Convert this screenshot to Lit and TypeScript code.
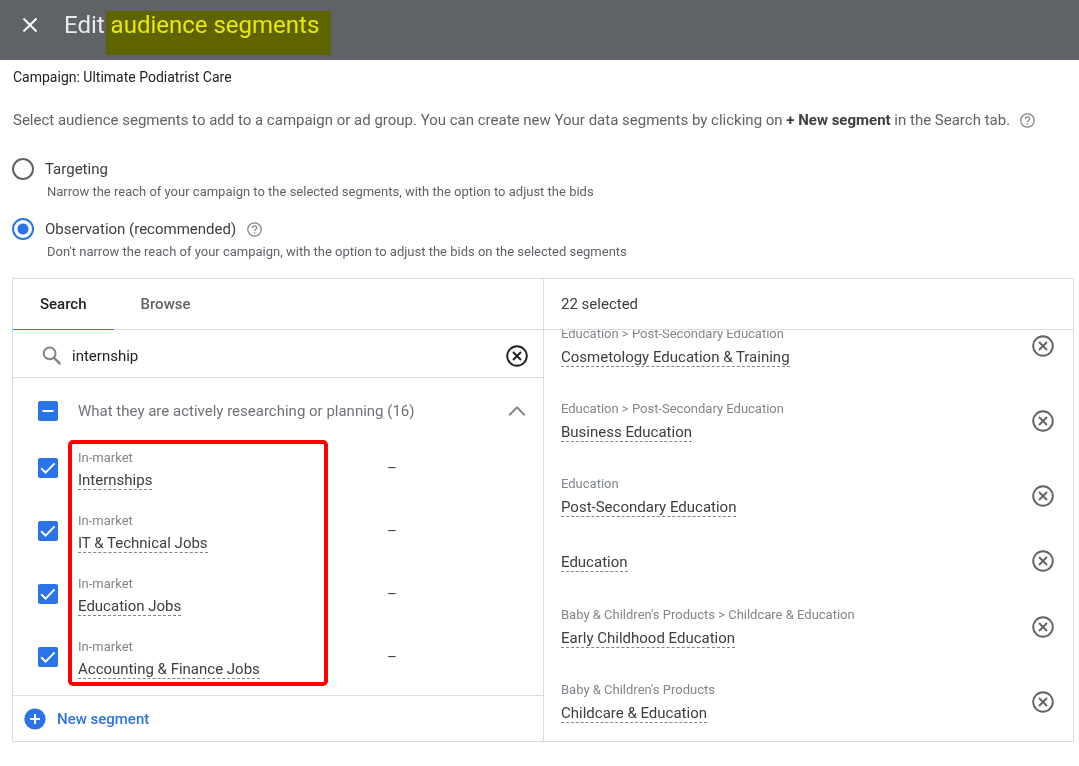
import { LitElement, html, css, svg } from "lit";
import { customElement, state, query } from "lit/decorators.js";

interface Segment {
  category?: string;
  name: string;
}

const found: Segment[] = [
  { category: "In-market", name: "Internships" },
  { category: "In-market", name: "IT & Technical Jobs" },
  { category: "In-market", name: "Education Jobs" },
  { category: "In-market", name: "Accounting & Finance Jobs" },
];

const selected: Segment[] = [
  { category: "Education > Post-Secondary Education", name: "Cosmetology Education & Training" },
  { category: "Education > Post-Secondary Education", name: "Business Education" },
  { category: "Education", name: "Post-Secondary Education" },
  { name: "Education" },
  { category: "Baby & Children's Products > Childcare & Education", name: "Early Childhood Education" },
  { category: "Baby & Children's Products", name: "Childcare & Education" },
];

const icon = (size: number, box: number, body: unknown) => html`<svg
  width=${size}
  height=${size}
  viewBox="0 0 ${box} ${box}"
  fill="none"
  stroke="currentColor"
  aria-hidden="true"
>${body}</svg>`;

const closeIcon = () => icon(16, 16, svg`<path stroke-width="2" d="M1.5 1.5l13 13M14.5 1.5l-13 13" />`);
const helpIcon = () =>
  icon(15, 15, svg`<circle cx="7.5" cy="7.5" r="6.7" stroke-width="1.3" />
    <path stroke-width="1.3" d="M5.4 6.1c0-1.3.9-2.2 2.1-2.2s2.1.8 2.1 2c0 1.5-2.1 1.6-2.1 3.2" />
    <path stroke-width="1.4" d="M7.5 10.2v1.5" />`);
const removeIcon = () =>
  icon(22, 22, svg`<circle cx="11" cy="11" r="9.8" stroke-width="1.9" />
    <path stroke-width="1.9" d="M7 7l8 8M15 7l-8 8" />`);
const searchIcon = () =>
  icon(20, 20, svg`<circle cx="7.6" cy="7.4" r="5.9" stroke-width="2" />
    <path stroke-width="2.4" d="M11.8 11.6l6.6 6.6" />`);
const chevronIcon = () => icon(18, 18, svg`<path stroke-width="2" d="M1.2 13.2L9 5.4l7.8 7.8" />`);
const plusIcon = () =>
  icon(22, 22, svg`<circle cx="11" cy="11" r="10.6" fill="currentColor" stroke="none" />
    <path stroke="#fff" stroke-width="2" d="M11 6.1v9.8M6.1 11h9.8" />`);
const tickIcon = () => icon(20, 20, svg`<path stroke="#fff" stroke-width="2" d="M3.2 10.2l4.4 4.4 9-9.2" />`);
const minusIcon = () => icon(20, 20, svg`<path stroke="#fff" stroke-width="2" d="M4.5 10h11" />`);

@customElement("app-root")
export class AppRoot extends LitElement {
  @state() private mode = "observation";
  @query(".selected-list") private selectedList!: HTMLElement;

  static styles = css`
    :host {
      --blue: #2a73e8;
      --line: #dadce0;
      display: block;
      background: #fff;
      color: #3c4043;
      font: 15px/20px Roboto, "Liberation Sans", sans-serif;
    }
    * { box-sizing: border-box; }
    svg { display: block; flex: none; }
    h1, h2, p, ul { margin: 0; padding: 0; }
    ul { list-style: none; }
    button {
      border: 0;
      padding: 0;
      background: none;
      color: inherit;
      font: inherit;
      cursor: pointer;
    }
    input { margin: 0; }

    .bar {
      display: flex;
      align-items: center;
      gap: 26px;
      height: 60px;
      padding: 0 22px 10px;
      background: #5f6368;
      color: #fff;
    }
    .title {
      font-size: 24px;
      line-height: 32px;
      font-weight: 400;
      color: #e8eaed;
    }
    .marked { position: relative; }
    .marked::after {
      content: "";
      position: absolute;
      inset: 0 -12px -16px -5px;
      background: #ff0;
      mix-blend-mode: multiply;
    }

    .page { padding: 7px 5px 24px 12px; }
    .campaign {
      font-size: 14px;
      color: #202124;
      padding-left: 1px;
    }
    .intro {
      display: flex;
      align-items: center;
      gap: 10px;
      padding: 23px 0 0 1px;
      color: #5f6368;
    }
    .intro strong { color: #3c4043; }
    .help { color: #80868b; }

    .modes {
      border: 0;
      margin: 0;
      padding: 28px 0 0;
      display: grid;
      gap: 14px;
    }
    .mode {
      display: grid;
      grid-template-columns: 22px auto auto 1fr;
      column-gap: 11px;
      align-items: center;
    }
    .radio {
      appearance: none;
      width: 22px;
      height: 22px;
      border: 2px solid #5f6368;
      border-radius: 50%;
    }
    .radio:checked {
      border-color: var(--blue);
      background: radial-gradient(circle, var(--blue) 5px, #fff 6px);
    }
    .hint {
      grid-column: 2 / -1;
      padding-left: 2px;
      font-size: 13px;
      line-height: 24px;
      color: #5f6368;
    }

    .picker {
      display: grid;
      grid-template-columns: 1fr 1fr;
      margin-top: 14px;
      border: 1px solid var(--line);
    }
    .right {
      display: flex;
      flex-direction: column;
      border-left: 1px solid var(--line);
    }
    .tabs {
      display: flex;
      height: 51px;
      border-bottom: 1px solid var(--line);
    }
    .tab {
      height: 51px;
      padding: 0 27px;
      font-weight: 500;
      color: #5f6368;
      border-bottom: 1px solid transparent;
    }
    .tab.current {
      color: #202124;
      border-bottom-color: var(--blue);
    }
    .search {
      display: flex;
      align-items: center;
      gap: 10px;
      height: 48px;
      padding: 4px 15px 0 29px;
      color: #80868b;
      border-bottom: 1px solid var(--line);
    }
    .query {
      flex: 1;
      min-width: 0;
      border: 0;
      padding: 0;
      outline: 0;
      background: none;
      font: inherit;
      color: #202124;
    }
    .clear { color: #202124; }

    .results { padding: 8px 0 7px; }
    .group {
      display: flex;
      align-items: center;
      gap: 20px;
      height: 50px;
      padding: 0 17px 0 25px;
      color: #80868b;
    }
    .group label { flex: 1; color: #6f7378; }
    .check { display: grid; }
    .check > * { grid-area: 1 / 1; }
    .check svg { pointer-events: none; visibility: hidden; }
    .check input:checked + svg, .check input:indeterminate + svg { visibility: visible; }
    .check input {
      appearance: none;
      width: 20px;
      height: 20px;
      border: 2px solid #5f6368;
      border-radius: 2px;
    }
    .check input:checked, .check input:indeterminate {
      background: var(--blue);
      border-color: var(--blue);
    }
    .matches { position: relative; }
    .outline {
      position: absolute;
      left: 55px;
      top: 4px;
      width: 260px;
      height: 246px;
      border: 4px solid #f00;
      border-radius: 5px;
      pointer-events: none;
    }
    .match {
      display: grid;
      grid-template-columns: 20px 1fr 156px;
      column-gap: 20px;
      align-items: center;
      height: 63px;
      padding-left: 25px;
    }
    .segment {
      display: grid;
      justify-items: start;
      gap: 6px;
      padding-top: 2px;
    }
    .match .segment {
      gap: 5px;
      padding-top: 4px;
    }
    .category {
      font-size: 13px;
      line-height: 16px;
      color: #80868b;
    }
    .name {
      line-height: 18px;
      border-bottom: 1px dashed #80868b;
    }
    .new {
      display: flex;
      align-items: center;
      height: 46px;
      padding-left: 11px;
      border-top: 1px solid var(--line);
      color: var(--blue);
    }
    .new button {
      display: flex;
      align-items: center;
      gap: 11px;
      font-weight: 500;
    }

    .count {
      height: 51px;
      padding: 15px 17px;
      font-size: 15px;
      line-height: 20px;
      font-weight: 400;
      border-bottom: 1px solid var(--line);
    }
    .selected-list {
      flex: 1;
      contain: size;
      overflow-y: auto;
      scrollbar-width: none;
      padding-bottom: 16px;
    }
    .chosen {
      display: flex;
      align-items: center;
      justify-content: space-between;
      height: 75px;
      padding: 0 19px 0 17px;
      color: #5f6368;
    }
    .chosen.single { height: 56px; }
    .chosen .name { color: #3c4043; }
  `;

  firstUpdated() {
    this.selectedList.scrollTop = 22;
  }

  private renderMode(value: string, label: string, hint: string, help = false) {
    return html`<div class="mode">
      <input
        class="radio"
        type="radio"
        name="mode"
        id=${value}
        .checked=${this.mode === value}
        @change=${() => (this.mode = value)}
      />
      <label for=${value}>${label}</label>
      ${help ? html`<button class="help" aria-label="Help">${helpIcon()}</button>` : null}
      <p class="hint">${hint}</p>
    </div>`;
  }

  private renderMatch(s: Segment, i: number) {
    return html`<li class="match">
      <span class="check"><input type="checkbox" id="match-${i}" checked />${tickIcon()}</span>
      <label class="segment" for="match-${i}">
        <span class="category">${s.category}</span>
        <span class="name">${s.name}</span>
      </label>
      <span>–</span>
    </li>`;
  }

  private renderChosen(s: Segment) {
    return html`<li class="chosen ${s.category ? "" : "single"}">
      <div class="segment">
        ${s.category ? html`<span class="category">${s.category}</span>` : null}
        <span class="name">${s.name}</span>
      </div>
      <button aria-label="Remove">${removeIcon()}</button>
    </li>`;
  }

  render() {
    return html`
      <header class="bar">
        <button aria-label="Close">${closeIcon()}</button>
        <h1 class="title">Edit <span class="marked">audience segments</span></h1>
      </header>
      <main class="page">
        <p class="campaign">Campaign: Ultimate Podiatrist Care</p>
        <div class="intro">
          <p>
            Select audience segments to add to a campaign or ad group. You can create new Your data segments by
            clicking on <strong>+ New segment</strong> in the Search tab.
          </p>
          <button class="help" aria-label="Help">${helpIcon()}</button>
        </div>
        <fieldset class="modes">
          ${this.renderMode(
            "targeting",
            "Targeting",
            "Narrow the reach of your campaign to the selected segments, with the option to adjust the bids",
          )}
          ${this.renderMode(
            "observation",
            "Observation (recommended)",
            "Don't narrow the reach of your campaign, with the option to adjust the bids on the selected segments",
            true,
          )}
        </fieldset>
        <div class="picker">
          <section>
            <div class="tabs" role="tablist">
              <button class="tab current" role="tab" aria-selected="true">Search</button>
              <button class="tab" role="tab" aria-selected="false">Browse</button>
            </div>
            <div class="search">
              ${searchIcon()}
              <input class="query" type="text" aria-label="Search segments" value="internship" />
              <button class="clear" aria-label="Clear">${removeIcon()}</button>
            </div>
            <div class="results">
              <div class="group">
                <span class="check"><input type="checkbox" id="group" .indeterminate=${true} />${minusIcon()}</span>
                <label for="group">What they are actively researching or planning (16)</label>
                <button aria-label="Collapse">${chevronIcon()}</button>
              </div>
              <div class="matches">
                <ul>${found.map((s, i) => this.renderMatch(s, i))}</ul>
                <div class="outline"></div>
              </div>
            </div>
            <div class="new"><button>${plusIcon()}New segment</button></div>
          </section>
          <section class="right">
            <h2 class="count">22 selected</h2>
            <ul class="selected-list">${selected.map((s) => this.renderChosen(s))}</ul>
          </section>
        </div>
      </main>
    `;
  }
}
